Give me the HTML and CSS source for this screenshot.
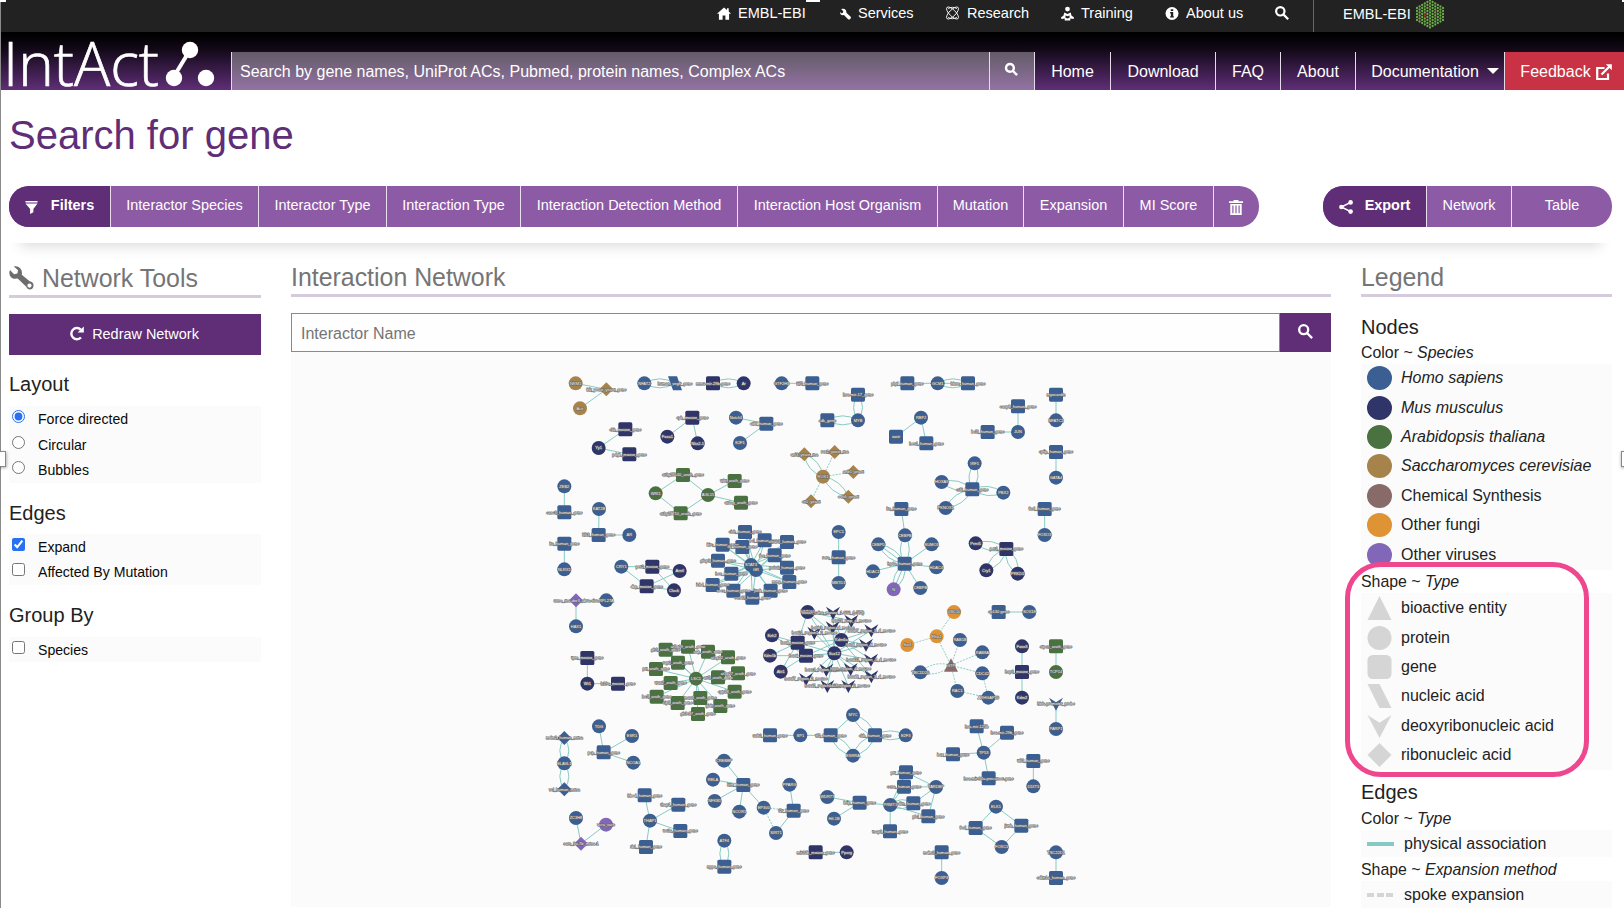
FILE: index.html
```html
<!DOCTYPE html>
<html lang="en">
<head>
<meta charset="utf-8">
<title>IntAct - Search for gene</title>
<link rel="stylesheet" href="styles.css">
</head>
<body>
<nav class="masthead">
  <a class="m-item m-home"><svg class="ico" viewBox="0 0 16 14"><path d="M8 0 0 7.2h2.2V14h4.2V9.4h3.2V14h4.2V7.2H16l-2.6-2.4V1h-2v2z"/></svg><span>EMBL-EBI</span></a>
  <a class="m-item m-services"><svg class="ico" viewBox="0 0 12 12"><path d="M1.2.6 3.6 3 3 4.8l-1.9.4L0 3.6c-.3 2 1 3.8 3.1 3.8l1.2-.2 4.5 4.4c.6.6 1.5.5 2 0l.8-.8c.5-.6.5-1.300 0-1.900L7 4.600C7.400 2 5.400-.2 2.800.2z"/></svg><span>Services</span></a>
  <a class="m-item m-research"><svg class="ico line" viewBox="0 0 16 16"><ellipse cx="8" cy="8" rx="9" ry="3.600" transform="rotate(45 8 8)"/><ellipse cx="8" cy="8" rx="9" ry="3.600" transform="rotate(-45 8 8)"/><path d="M3 3C6 1 10 1 13 3M3 13c3 2 7 2 10 0"/></svg><span>Research</span></a>
  <a class="m-item m-training"><svg class="ico" viewBox="0 0 14 15"><circle cx="7" cy="2.700" r="2.600"/><path d="M3.600 6.500 7 8l3.400-1.500 1 3.500 2.600 1.500-.5 2-3.500-.6V15H4v-2.100l-3.500.6-.5-2L2.600 10z"/><path class="cut" d="M4.800 9.700 7 10.500l2.200-.8v2.500l-2.200.8-2.200-.8z"/></svg><span>Training</span></a>
  <a class="m-item m-about"><svg class="ico" viewBox="0 0 14 14"><circle cx="7" cy="7" r="7"/><path class="cut" d="M5.700 2.300h2.600v2H5.700zM5 5.500h3.300V10H9v1.400H5V10h.8V7H5z"/></svg><span>About us</span></a>
  <a class="m-item m-find"><svg class="ico stroke" viewBox="0 0 14 14"><circle cx="5.300" cy="5.300" r="4.200"/><path d="m8.600 8.600 4.600 4.600"/></svg></a>
  <a class="m-item m-brand"><span>EMBL-EBI</span><svg id="hex" class="hex" viewBox="-14 -15 28 30"></svg></a>
</nav>
<header class="header">
  <div class="logo"><svg viewBox="0 0 231 57"><text class="logo-text" x="3" y="53" textLength="156" lengthAdjust="spacingAndGlyphs">IntAct</text><path class="logo-link" d="M173 45 190 17"/><circle cx="190" cy="17" r="8.200"/><circle cx="174" cy="45" r="8.200"/><circle cx="206" cy="45" r="8.200"/></svg></div>
  <div class="h-search"><input type="text" placeholder="Search by gene names, UniProt ACs, Pubmed, protein names, Complex ACs"><button><svg class="ico stroke" viewBox="0 0 14 14"><circle cx="5.300" cy="5.300" r="4.200"/><path d="m8.600 8.600 4.400 4.400"/></svg></button></div>
  <a class="tab t-home">Home</a><a class="tab t-down">Download</a><a class="tab t-faq">FAQ</a><a class="tab t-about">About</a><a class="tab t-doc">Documentation<i class="caret"></i></a>
  <a class="tab t-feed">Feedback<svg class="ico line2" viewBox="0 0 16 16"><path d="M8.500 4H1.200v11H12v-5.500M5.500 10.500 14 2"/><path class="solid" d="M9.800.3h6v6z"/></svg></a>
</header>
<section class="top">
  <h1>Search for gene</h1>
  <div class="bars">
    <div class="bar">
      <b class="f0"><svg class="ico" viewBox="0 0 14 14"><path d="M.5 0h13v1.600H.5zM.5 2.600h13L9 8.500v3.700L5.500 14V8.500z"/></svg>Filters</b><a class="f1">Interactor Species</a><a class="f2">Interactor Type</a><a class="f3">Interaction Type</a><a class="f4">Interaction Detection Method</a><a class="f5">Interaction Host Organism</a><a class="f6">Mutation</a><a class="f7">Expansion</a><a class="f8">MI Score</a><a class="f9"><svg class="ico" viewBox="0 0 14 15"><path fill-rule="evenodd" d="M4.500 0h5v1.300H14V3H0V1.300h4.500zM1.300 4h11.400v11H1.300zM3.300 5.500v7.700h1.200V5.500zm3.100 0v7.700h1.200V5.500zm3.100 0v7.700h1.200V5.500z"/></svg></a>
    </div>
    <div class="bar">
      <b class="e0"><svg class="ico" viewBox="0 0 14 14"><circle cx="11.600" cy="2.400" r="2.300"/><circle cx="2.400" cy="7" r="2.300"/><circle cx="11.600" cy="11.600" r="2.300"/><path class="share" d="M11.600 2.400 2.400 7l9.200 4.600"/></svg>Export</b><a class="e1">Network</a><a class="e2">Table</a>
    </div>
  </div>
</section>
<main class="cols">
  <aside class="tools">
    <h2><svg class="wrench" viewBox="0 0 26 26"><path fill-rule="evenodd" d="M5 1 9.500 5 8.700 8.300 5.300 9 1 4.800C-.8 9 1.500 13.500 6 13.800l3-.3 9 8.500c1 4 7 4 7.500-.8.2-3-1.500-4.700-4-4.900L13.300 9.500C14.500 4 10-.5 5 1zM21.300 18.700a2.200 2.200 0 1 1 0 4.400 2.200 2.200 0 0 1 0-4.400z"/></svg>Network Tools</h2>
    <button class="redraw"><svg class="ico" viewBox="0 0 15 15"><path class="turn" d="M11.800 3.600A5.600 5.600 0 1 0 12 11.500"/><path d="M14.800.4v6.200H8.600z"/></svg>Redraw Network</button>
    <h3>Layout</h3>
    <div class="opts"><label><input type="radio" name="layout" checked>Force directed</label><label><input type="radio" name="layout">Circular</label><label><input type="radio" name="layout">Bubbles</label></div>
    <h3 class="low">Edges</h3>
    <div class="opts"><label><input type="checkbox" checked>Expand</label><label><input type="checkbox">Affected By Mutation</label></div>
    <h3 class="low last">Group By</h3>
    <div class="opts"><label><input type="checkbox">Species</label></div>
  </aside>
  <section class="network">
    <h2>Interaction Network</h2>
    <div class="n-search"><input type="text" placeholder="Interactor Name"><button><svg class="ico stroke" viewBox="0 0 14 14"><circle cx="5.300" cy="5.300" r="4.200"/><path d="m8.600 8.600 4.600 4.600"/></svg></button></div>
    <svg id="graph" class="graph" viewBox="291 352 1040 555"></svg>
  </section>
  <aside class="legend">
    <h2>Legend</h2>
    <h3>Nodes</h3>
    <h4>Color ~ <em>Species</em></h4>
    <ul>
      <li><i class="dot human"></i><em>Homo sapiens</em></li>
      <li><i class="dot mouse"></i><em>Mus musculus</em></li>
      <li><i class="dot cress"></i><em>Arabidopsis thaliana</em></li>
      <li><i class="dot yeast"></i><em>Saccharomyces cerevisiae</em></li>
      <li><i class="dot chem"></i>Chemical Synthesis</li>
      <li><i class="dot fungi"></i>Other fungi</li>
      <li><i class="dot virus"></i>Other viruses</li>
    </ul>
    <div class="shapes">
      <h4>Shape ~ <em>Type</em></h4>
      <ul>
        <li><svg class="shape" viewBox="0 0 25 25"><path d="M12.500 0 25 25H0z"/></svg>bioactive entity</li>
        <li><svg class="shape" viewBox="0 0 25 25"><circle cx="12.500" cy="12.500" r="12.500"/></svg>protein</li>
        <li><svg class="shape" viewBox="0 0 25 25"><rect width="25" height="25" rx="5.500"/></svg>gene</li>
        <li><svg class="shape" viewBox="0 0 25 25"><path d="M0 0h12.500L25 25H12.500z"/></svg>nucleic acid</li>
        <li><svg class="shape" viewBox="0 0 25 25"><path d="m0 1 12.500 8L25 1 12.500 25z"/></svg>deoxyribonucleic acid</li>
        <li><svg class="shape" viewBox="0 0 25 25"><path d="M12.500 0 25 12.500 12.500 25 0 12.500z"/></svg>ribonucleic acid</li>
      </ul>
      <div class="highlight"></div>
    </div>
    <h3 class="h-edges">Edges</h3>
    <h4>Color ~ <em>Type</em></h4>
    <ul class="lines"><li><i class="line-solid"></i>physical association</li></ul>
    <h4>Shape ~ <em>Expansion method</em></h4>
    <ul class="lines"><li><i class="line-dash"></i>spoke expansion</li></ul>
  </aside>
</main>
<div class="frame-line"></div>
<i class="grip g-tl"></i><i class="grip g-t"></i><i class="grip g-tr"></i><i class="grip g-l"></i><i class="grip g-r"></i>
<script src="graph.js"></script>
</body>
</html>
```
FILE: styles.css
```css
* { box-sizing: border-box; }
body { margin: 0; width: 1624px; height: 908px; overflow: hidden; position: relative; background: #fff; color: #222; font-family: "Liberation Sans", Arial, sans-serif; }
h1, h2, h3, h4, ul { margin: 0; padding: 0; font-weight: 400; list-style: none; }
input, button { font-family: inherit; margin: 0; border-radius: 0; }
.ico { fill: currentColor; flex: none; overflow: visible; }
.cut { fill: #222; }
.stroke { fill: none; stroke: currentColor; stroke-width: 2.2; }
.line { fill: none; stroke: currentColor; stroke-width: 1; }
.line2 { fill: none; stroke: currentColor; stroke-width: 2.2; }
.line2 .solid { fill: currentColor; stroke: none; }

.masthead { height: 32px; background: #222; color: #fff; display: flex; padding-left: 717px; font-size: 14.5px; }
.m-item { display: flex; align-items: center; height: 26px; flex: none; }
.m-item .ico { width: 14px; height: 13px; margin-right: 7px; }
.m-home { width: 123px; }
.m-services { width: 105px; }
.m-services .ico { width: 11px; height: 12px; margin-top: 2px; }
.m-research { width: 116px; }
.m-research .ico { width: 15px; height: 14px; }
.m-training { width: 104px; }
.m-training .ico { height: 15px; width: 13px; }
.m-about { width: 110px; }
.m-find { width: 37px; }
.m-find .ico { width: 14px; height: 14px; }
.m-brand { height: 32px; padding: 0 0 5px 29px; margin-left: 1px; border-left: 1px solid #666; }
.hex { width: 28px; height: 30px; margin: 1px 0 0 5px; }

.header { height: 58px; display: flex; align-items: flex-end; background: linear-gradient(#000 2px, #130918 30%, #5f2e77 100%); color: #fff; font-size: 16px; }
.logo { width: 231px; height: 57px; flex: none; }
.logo svg { display: block; width: 231px; height: 57px; fill: #fff; overflow: visible; }
.logo-text { font: 300 61px "Open Sans", Lato, sans-serif; stroke: #fff; stroke-width: .7px; }
.logo-link { stroke: #fff; stroke-width: 4; }
.h-search { display: flex; width: 804px; height: 38px; border: solid #e4dce8; border-width: 0 1px; background: rgba(255,255,255,.33); }
.h-search input { flex: 1; background: none; border: 0; padding: 2px 8px 0; color: #fff; font-size: 16px; outline: 0; }
.h-search input::placeholder { color: #fff; opacity: 1; }
.h-search button { width: 45px; border: 0; border-left: 1px solid #e4dce8; background: none; color: #fff; padding: 0 2px 0 0; }
.h-search .ico { width: 13px; height: 13px; stroke-width: 2.6; }
.tab { height: 38px; border-right: 1px solid #e4dce8; display: flex; align-items: center; justify-content: center; flex: none; padding-top: 2px; }
.t-home { width: 76px; }
.t-down { width: 105px; }
.t-faq { width: 65px; }
.t-about { width: 75px; }
.t-doc { width: 149px; gap: 8px; padding-left: 10px; }
.caret { border: 6px solid transparent; border-top-color: #fff; border-bottom: 0; margin-top: -2px; }
.t-feed { width: 119px; border: 0; background: #c93244; gap: 5px; padding-left: 3px; }
.t-feed .ico { width: 16px; height: 16px; }

.top { margin: 0 12px 0 9px; height: 153px; box-shadow: 0 15px 12px -11px rgba(0,0,0,.13); }
h1 { height: 96px; padding-top: 22px; line-height: 46px; font-size: 40px; color: #5f2e77; }
.bars { display: flex; justify-content: space-between; }
.bar { display: flex; height: 41px; border-radius: 20px; overflow: hidden; background: #8d5aa6; color: #fff; font-size: 14.45px; }
.bar > * { display: flex; align-items: center; justify-content: center; padding-bottom: 3px; white-space: nowrap; }
.bar > * + * { border-left: 1px solid #e9dfee; }
.bar b { background: #5f2e77; }
.f0 { width: 101px; gap: 13px; }
.f0 .ico { width: 13px; height: 13px; margin-top: 4px; }
.f1 { width: 148px; }
.f2 { width: 128px; }
.f3 { width: 134px; }
.f4 { width: 217px; }
.f5 { width: 200px; }
.f6 { width: 86px; }
.f7 { width: 100px; }
.f8 { width: 90px; }
.f9 { width: 46px; padding-right: 2px; }
.f9 .ico { width: 14px; height: 15px; margin-top: 4px; }
.e0 { width: 103px; gap: 12px; }
.e0 .ico { width: 14px; height: 14px; margin-top: 4px; }
.share { fill: none; stroke: #fff; stroke-width: 1.6; }
.e1 { width: 85px; }
.e2 { width: 101px; }

.cols { display: grid; grid-template-columns: 252px 1040px 251px; column-gap: 30px; padding-left: 9px; }
h2 { height: 54px; padding-top: 16px; line-height: 36px; font-size: 24.9px; color: #757575; border-bottom: 3px solid #d6cbdd; }
.tools h2 { height: 55px; padding-top: 17px; display: flex; gap: 8px; }
.wrench { width: 25px; height: 26px; fill: #6d6d6d; margin-top: 5px; }
.redraw { display: flex; width: 252px; height: 41px; margin-top: 16px; align-items: center; justify-content: center; gap: 8px; padding: 0 2px 2px 0; border: 0; background: #5f2e77; color: #fff; font-size: 14.45px; }
.redraw .ico { width: 15px; height: 15px; }
.turn { fill: none; stroke: #fff; stroke-width: 2.4; }
.tools h3 { padding: 17px 0 10px; height: 51px; line-height: 24px; font-size: 20px; }
.tools .low { padding-top: 18px; }
.tools .last { height: 52px; }
.opts { background: #fbfbfb; font-size: 14.1px; color: #0a0a0a; }
.opts label { display: flex; align-items: flex-start; height: 25.5px; line-height: 26px; }
.opts input { width: 13px; height: 13px; margin: 4px 13px 0 3px; accent-color: #2871f0; }

.n-search { display: flex; height: 39px; margin-top: 16px; }
.n-search input { flex: 1; border: 1px solid #8a8a8a; padding: 2px 8px 0 9px; font-size: 16px; background: #fefefe; }
.n-search input::placeholder { color: #757575; }
.n-search button { width: 51px; border: 0; background: #5f2e77; color: #fff; padding: 0; }
.n-search .ico { width: 15px; height: 15px; }
.graph { display: block; width: 1040px; height: 555px; background: #fbfbfb; }
.edge { fill: none; stroke: #86cbc3; stroke-width: 1; }
.edge.dash { stroke-dasharray: 2 1.2; }
.label { font-size: 4px; text-anchor: middle; fill: #f4f4f4; stroke: #666; stroke-width: 1px; paint-order: stroke; }
.human { fill: #3b5f93; background: #3b5f93; }
.mouse { fill: #2f3469; background: #2f3469; }
.cress { fill: #4a7240; background: #4a7240; }
.yeast { fill: #a7834c; background: #a7834c; }
.chem { fill: #886a69; background: #886a69; }
.fungi { fill: #de9335; background: #de9335; }
.virus { fill: #8267b9; background: #8267b9; }

.legend h3 { height: 48px; padding-top: 18px; line-height: 24px; font-size: 20px; }
.legend h4 { height: 24px; line-height: 24px; font-size: 15.9px; margin-top: -4px; }
.legend h4 + ul { margin-top: -1px; }
.legend ul { background: #fbfbfb; font-size: 16px; height: 206px; padding-top: 1px; }
.legend li { display: flex; align-items: center; height: 29.4px; padding: 0 0 3px 6px; line-height: 24px; }
.dot { width: 25px; height: 24px; border-radius: 50%; margin-right: 9px; }
.shapes { position: relative; }
.legend .shapes h4 { margin-top: 0; }
.legend .shapes ul { height: 177px; padding-top: 2px; }
.shape { width: 25px; height: 24px; fill: #d5d5d5; margin-right: 9px; }
.highlight { position: absolute; left: -16px; top: -8px; width: 244px; height: 215px; border: 5px solid #ee478e; border-radius: 36px; }
.legend .h-edges { height: 41px; padding-top: 10px; }
.legend .lines { height: 27px; margin-bottom: 5px; padding: 0; }
.lines li { height: 27px; padding-bottom: 0; }
.line-solid, .line-dash { width: 27px; height: 4px; margin-right: 10px; background: #86cbc3; }
.line-dash { background: repeating-linear-gradient(90deg, #d5d5d5 0 7px, transparent 7px 9.500px); width: 26px; margin-right: 11px; }

.frame-line { position: absolute; left: 0; top: 0; width: 1px; height: 908px; background: #8b8b8b; }
.grip { position: absolute; background: #fff; }
.g-tl { left: 0; top: 0; width: 6px; height: 2px; }
.g-t { left: 806px; top: 0; width: 14px; height: 2px; }
.g-tr { left: 1622px; top: 0; width: 2px; height: 2px; }
.g-l { left: -6px; top: 451px; width: 12px; height: 16px; border: 1px solid #888; box-shadow: 1px 1px 3px rgba(0,0,0,.3); }
.g-r { left: 1621px; top: 451px; width: 12px; height: 16px; border: 1px solid #888; box-shadow: 0 1px 3px rgba(0,0,0,.3); }
```
FILE: graph.js
```js
const NS = 'http://www.w3.org/2000/svg';
const species = { h: 'human', m: 'mouse', a: 'cress', y: 'yeast', c: 'chem', f: 'fungi', v: 'virus' };
const graph = document.getElementById('graph');

function add(parent, tag, attrs, text) {
  const el = document.createElementNS(NS, tag);
  for (const k in attrs) el.setAttribute(k, attrs[k]);
  if (text) el.textContent = text;
  parent.appendChild(el);
  return el;
}

const layers = { edges: add(graph, 'g', {}), nodes: add(graph, 'g', {}), labels: add(graph, 'g', {}) };

const shapes = {
  c: () => ['circle', { r: 7 }],
  s: () => ['rect', { x: -7, y: -7, width: 14, height: 14, rx: 1.6 }],
  d: () => ['path', { d: 'M0-7 7 0 0 7-7 0z' }],
  p: () => ['path', { d: 'M-7-7H2L7 7H-2z' }],
  v: () => ['path', { d: 'M-7-6 0-1.500 7-6 0 7z' }],
  t: () => ['path', { d: 'M0-7 7 6.500H-7z' }]
};

// Node: "shape+species x y label", three units per pixel from the origin.
// Edge: "a-b" single, "a=b" pair of arcs, "a~b" dashed, "a%b" dashed arcs.
function region(ox, oy, nodes, edges) {
  const pts = nodes.map(n => {
    const [kind, x, y, ...label] = n.split(' ');
    return { kind, x: ox + x / 3, y: oy + y / 3, label: label.join(' ') };
  });
  edges.split(' ').forEach(e => {
    const m = e.match(/^(\d+)([-=~%])(\d+)$/);
    if (!m) return;
    const a = pts[m[1]], b = pts[m[3]];
    const cls = 'edge' + (m[2] === '~' || m[2] === '%' ? ' dash' : '');
    const bends = m[2] === '=' || m[2] === '%' ? [9, -9] : [0];
    const dx = b.x - a.x, dy = b.y - a.y, len = Math.hypot(dx, dy) || 1;
    bends.forEach(k => {
      const cx = (a.x + b.x) / 2 - dy / len * k, cy = (a.y + b.y) / 2 + dx / len * k;
      add(layers.edges, 'path', { class: cls, d: `M${a.x} ${a.y}Q${cx} ${cy} ${b.x} ${b.y}` });
    });
  });
  pts.forEach(p => {
    const [tag, attrs] = shapes[p.kind[0]]();
    add(layers.nodes, tag, { ...attrs, class: species[p.kind[1]], transform: `translate(${p.x} ${p.y})` });
    add(layers.labels, 'text', { class: 'label', x: p.x, y: p.y + 1.4 }, p.label);
  });
}

const star = (hubs, from, to) => {
  const out = [];
  for (let i = from; i <= to; i++) hubs.forEach(h => out.push(h + '-' + i));
  return out.join(' ');
};

region(540, 360, [
  'cy 107 70 NRM1', 'dy 199 88 bik_yeast_yeast_gene', 'cy 120 145 Ace',
  'ch 313 70 NFAT2', 'ph 405 70 human_vegfr_gene', 'sm 519 70 mmu-mir-29b-gene', 'cm 611 70 Ar',
  'ch 725 70 GTF2H3', 'sh 817 70 kif5_human_gene',
  'sm 256 208 ckb_mouse_gene', 'cm 176 264 Yy1', 'sm 268 283 pdgb_mouse_gene',
  'sm 457 173 cyb_mouse_gene', 'cm 382 230 Foxa1', 'cm 473 250 Nkx2-1',
  'ch 588 173 Notch1', 'sh 679 191 atbf_human_gene', 'ch 600 249 E2F1',
  'sa 429 345 at3g27140_arath_gene', 'ca 347 400 WRI1', 'sa 422 460 at3g27710_arath_gene', 'ca 504 405 AGL15', 'sa 584 363 wbt_arath_gene', 'sa 603 428 at4og_arath_gene',
  'ch 73 379 ZEB2', 'sh 73 457 casc3_human_gene', 'sh 73 551 lta_human_gene', 'ch 73 628 NLRX1',
  'ch 177 447 KAT2B', 'sh 176 525 klk3_human_gene', 'ch 268 525 AR',
  'ch 244 620 CRY1', 'sm 337 620 per2_mouse_gene', 'cm 419 633 Arntl', 'sm 320 679 dbp_mouse_gene', 'cm 402 691 Clock',
  'dv 108 721 usno_rna-der3_abra-siva', 'ch 199 721 RPL27A', 'ch 108 799 HAX1'
], '0-1 1-2 3=4 5=6 7-8 9-10 10-11 12-13 12-14 15-16 16-17 18-19 19-20 20-21 18-21 21-22 21-23 24-25 26-27 28-29 29-30 31-32 31-34 32-33 32-35 34-33 34-35 36~37 36-38');

region(540, 360, [
  'ch 648 630 GR', 'ch 633 615 STAT3',
  'sh 615 516 cish_human_gene', 'sh 548 554 birc_human_gene', 'sh 674 541 bcl_human_gene', 'sh 741 546 sfttas3_human_gene', 'sh 607 561 il6_human_gene', 'sh 704 586 fos_human_gene',
  'sh 534 602 gfap3_human_gene', 'sh 741 623 pola6_human_gene', 'sh 574 641 hes_human_gene', 'sh 748 666 mmp_human_gene', 'sh 518 675 icb4_human_gene', 'sh 580 692 socs_human_gene', 'sh 692 692 junb_human_gene', 'sh 637 713 ccnd1_human_gene'
], star([0, 1], 2, 15));

region(810, 360, [
  'sh 292 70 plgf_human_gene', 'ch 383 70 GCM1', 'sh 474 70 hbze_human_gene',
  'sh 144 104 hsa-mir-17_gene', 'sh 52 181 cdk_gene', 'ch 144 181 MYB',
  'ch 333 173 RBPJ', 'sh 258 230 wwtr', 'sh 349 250 hes1_human_gene',
  'sh 624 139 casp8_human_gene', 'sh 533 216 bcl3_human_gene', 'ch 624 216 JUN',
  'sh 738 104 myocardin', 'ch 738 181 NFATC2', 'sh 738 276 cyfip_human_gene', 'ch 738 353 GATA4',
  'cy 39 350 ROX1', 'dy 74 276 rox1_yeast_rna', 'dy 130 336 anb1_yeast', 'dy 115 410 osh6_yeast', 'dy 3 424 ctt1_yeast', 'dy -17 283 ani3_yeast_rna',
  'sh 487 388 crl6_human_gene', 'ch 494 310 IRF1', 'ch 395 366 HOXA9', 'ch 580 398 PBX2', 'ch 407 444 PKNOX1',
  'sh 704 447 fasl_human_gene', 'ch 704 525 FOXO3',
  'sh 274 447 lta_human_gene', 'ch 285 526 CEBPB', 'sh 284 611 hp4a_human_gene', 'ch 205 553 CEBPD', 'ch 365 553 SUMO1', 'ch 379 622 HDAC4', 'ch 331 684 CEBPB', 'cv 251 688 N', 'ch 189 634 HDAC1',
  'ch 86 516 EPC1', 'sh 86 592 rora_human_gene', 'ch 86 669 MBTD1',
  'sm 589 567 per1_mouse_gene', 'cm 497 550 Prmt5', 'cm 529 631 Cry1', 'cm 623 641 PRKD1'
], '0-1 1-2 1=2 3=5 4=5 6-7 6-8 9-11 10-11 12-13 14-15 16~17 16~18 16=19 16~20 16=21 22=23 22=24 22=25 22=26 27-28 29-30 30=31 31-32 31=32 31-33 31-34 31-35 31=36 31-36 31-37 38-39 39-40 41=42 41=43 41=44');

region(540, 590, [
  'sm 142 204 tpm_mouse_gene', 'cm 142 281 Wt1', 'sm 234 281 h19a_mouse_gene',
  'dh 73 444 mdm2_human_mrna', 'ch 73 520 ELAVL1', 'dh 73 598 vcl_human_mrna',
  'ch 177 409 TDG', 'sh 191 487 pcp_human_gene', 'ch 276 438 ESR1', 'ch 280 518 NCOA1',
  'ch 108 684 ZC3H8', 'cv 198 704 vcra_sars', 'dv 123 761 sars_3a-7b_mrna-1',
  'ch 330 692 THAP1', 'sh 314 616 hbod_human_gene', 'sh 415 644 thap1_human_gene', 'sh 421 723 tor1a_human_gene', 'sh 318 771 rb1_human_gene',
  'sh 610 585 ktm_human_gene', 'ch 552 512 CREBBP', 'ch 519 569 RELA', 'ch 524 633 NFKB1', 'ch 598 665 NCOR1', 'ch 671 653 EP300', 'sh 761 662 f2r_human_gene', 'ch 749 584 PPARG', 'ch 708 729 SIRT1',
  'ch 553 752 ATF4', 'sh 553 830 nppa_human_gene'
], '0-1 1-2 3=4 4=5 6-7 7-8 7-9 10-12 11-12 13-14 13-15 13-16 13-17 18-19 18-20 18-21 18-22 18-23 23~24 24-25 23~26 24-26 27=28');

region(540, 590, [
  'ca 468 266 LSC1', 'sa 377 179 gh3_arath_gene', 'sa 444 170 at5g09_arath_gene', 'sa 504 185 aap_arath_gene', 'sa 564 202 at1g12_arath_gene', 'sa 414 218 rap2_arath_gene',
  'sa 348 237 prt_arath_gene', 'sa 534 262 arr5_arath_gene', 'sa 594 250 at3g27_arath_gene', 'sa 392 279 wax2_arath_gene', 'sa 584 305 cyp18_arath_gene', 'sa 350 320 lsc5_arath_gene',
  'sa 481 324 max4_arath_gene', 'sa 413 339 cip5_arath_gene', 'sa 541 348 gidt_arath_gene', 'sa 474 372 gh3-17_arath_gene'
], star([0], 1, 15));

region(810, 590, [
  'cf 432 66 USC10', 'cf 380 139 Rho1', 'cf 292 165 Ste4', 'tc 423 226 GTP', 'ch 450 150 RAB1B', 'ch 517 187 RAB8A', 'ch 517 250 CDC42', 'ch 442 303 RAC1', 'ch 331 247 TBC1D20', 'ch 535 323 ARHGAP10',
  'sh 566 66 cp130 gene', 'ch 658 66 SOX18', 'cm 636 169 Foxo3', 'sm 636 246 hsp3_mouse_gene', 'cm 636 323 Kdm2', 'sa 738 169 stpcn_arath_gene', 'ca 738 246 TCP14', 'vh 738 341 hbfa-promoter_probe', 'ch 738 417 PARP1',
  'sh -120 436 uvb2_human_gene', 'ch -29 436 SP1', 'sh 62 436 tff1_human_gene', 'ch 129 375 MYC', 'ch 129 497 ESRRA', 'sh 195 436 ckb_human_gene', 'ch 287 436 E2F3',
  'ch 521 488 TP53', 'sh 500 409 hsa-mir-125b', 'sh 591 428 hsa-mir-29b_gene', 'sh 429 493 bax_human_gene', 'sh 536 565 hsa-mir-34a-precursor-gene', 'sh 670 513 tdf3_human_gene', 'ch 670 589 DDIT3',
  'ch 241 645 PRMT1', 'sh 288 547 prr_human_gene', 'sh 282 590 ccna_human_gene', 'ch 378 591 TARDBP', 'sh 310 640 cdkn_human_gene', 'sh 355 679 plcl_human_gene', 'sh 149 638 brip_human_gene', 'ch 52 621 WDR77', 'ch 72 686 Hif-1B', 'sh 240 724 tsap3_human_gene',
  'ch 558 650 ELK1', 'sh 497 714 fosl_human_gene', 'sh 634 707 junb_human_gene', 'ch 575 771 FOXC1', 'sm 17 787 mir10b_mouse_gene', 'cm 110 787 Pparg', 'sh 395 787 mdm2_human_gene', 'ch 395 864 FOXP3', 'ch 738 787 TSC22D1', 'sh 738 864 cdkn1a_human_gene'
], '0~1 1~2 1~3 3~4 3~5 3~6 3~7 3%8 6~9 7~9 10-11 12-13 13-14 15-16 17-18 19-20 20-21 21-22 22=24 23=24 21=23 24=25 26-27 26-28 26-29 26-30 31-32 33-34 33-35 34-36 35-36 36-37 36-38 33=37 33-38 33-39 39-40 39-41 33-42 43-44 43-45 44-46 45-46 47-48 49-50 51-52');

region(750, 590, [
  'cm 173 66 HMNA5', 'cm 66 136 Ezh2', 'cm 60 197 Kdm5b', 'cm 92 245 Akt1', 'sm 143 158 hoxb_mouse_gene', 'sm 168 197 hoxd_mouse_gene', 'cm 274 150 Kdm6a', 'cm 253 190 Suz12',
  'vm 249 68 hoxa9_cdna_mouse_1-600_(+571)', 'vm 304 92 hox23_cmp_d_mouse', 'vm 193 128 hox01_region1_2_mouse', 'vm 248 112 hoxb3_region_d_mouse', 'vm 364 121 hoxb7_region_3_d_mouse', 'vm 348 164 hoxd_region_d_mouse', 'vm 363 209 hoxd11_region_3_d_mouse', 'vm 229 239 hoxc1_region_d_mouse', 'vm 302 237 hoxa_region_d_mouse', 'vm 364 259 hoxd8_region_3_d_mouse', 'vm 168 267 hoxd7_region_2_mouse', 'vm 232 288 hoxd1_region1_2_mouse', 'vm 295 288 hoxc8_region_2_mouse'
], '0-4 0-6 0-7 1-4 1-5 2-4 2-5 3-4 3-5 4-6 4-7 5-6 5-7 0-8 0-9 6-8 6-9 6-12 6-13 6-14 6-17 ' + star([7], 8, 20));

// EMBL hexagon of dots, one of them red.
const hex = document.getElementById('hex');
for (let c = -5; c <= 5; c++) {
  const n = 10 - Math.abs(c);
  for (let r = 0; r < n; r++) {
    const red = c === -2 && r === 4;
    add(hex, 'circle', { cx: c * 2.6, cy: (r - (n - 1) / 2) * 3, r: 1.15, fill: red ? '#e2231a' : '#6cab45' });
  }
}
```
